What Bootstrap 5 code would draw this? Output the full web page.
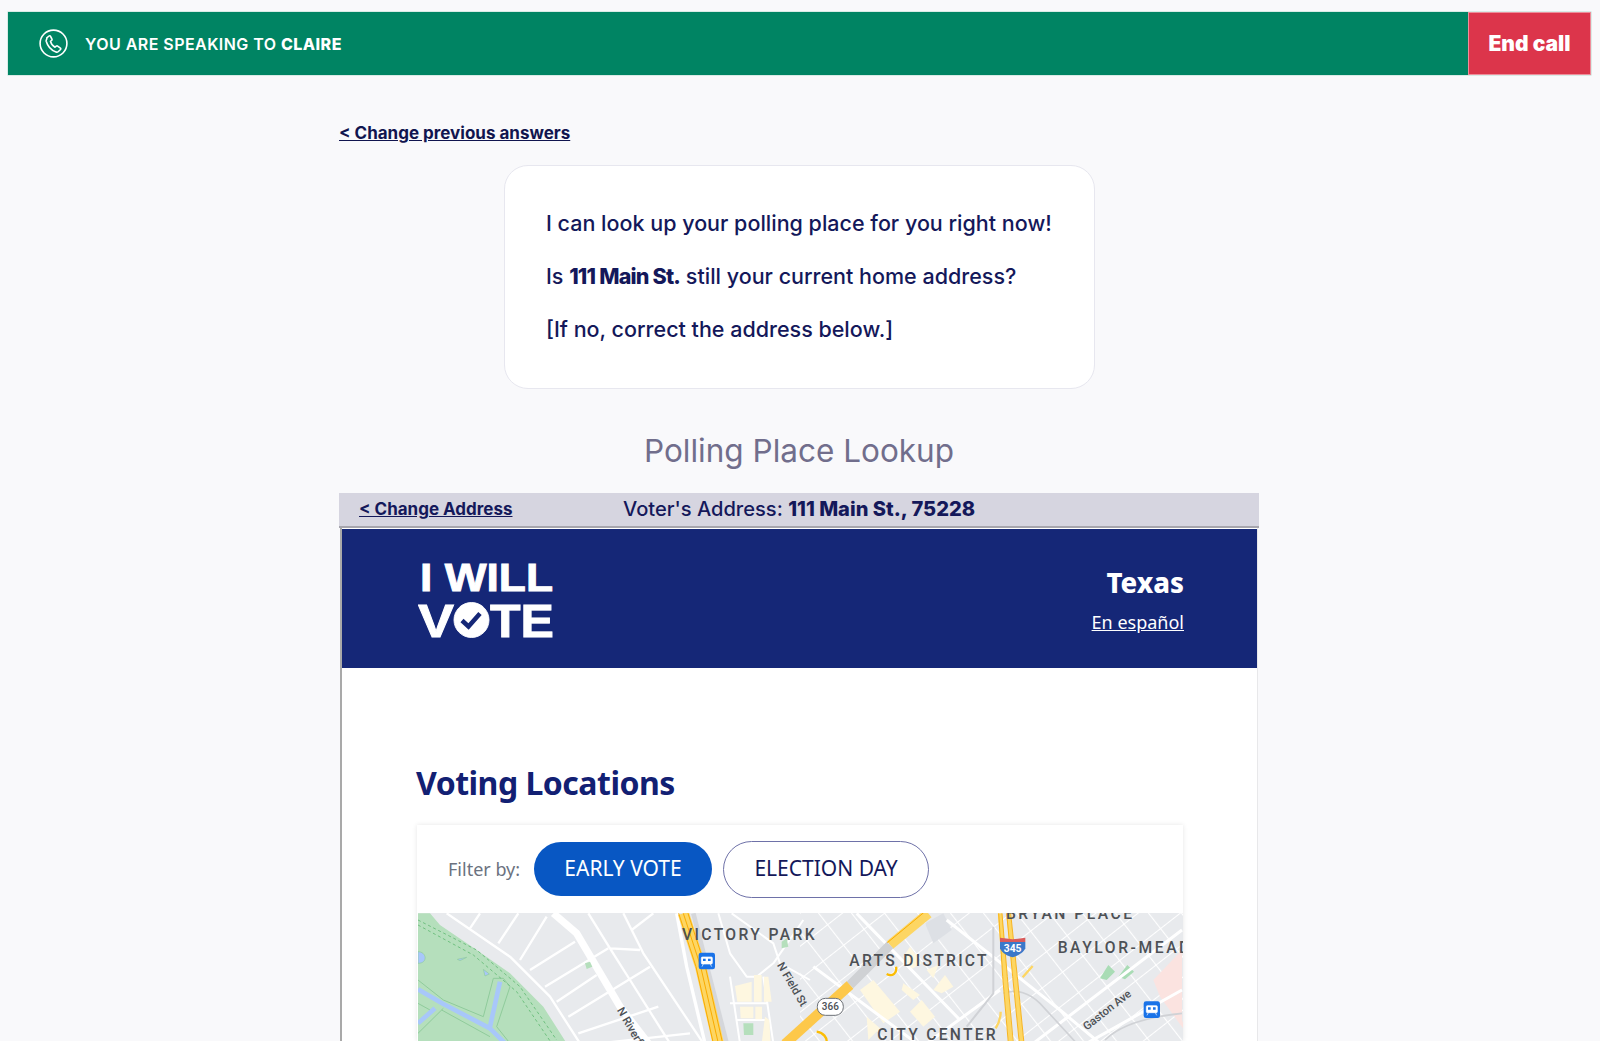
<!DOCTYPE html>
<html lang="en">
<head>
<meta charset="utf-8">
<title>Polling Place Lookup</title>
<link href="https://cdn.jsdelivr.net/npm/bootstrap@5.3.0/dist/css/bootstrap.min.css" rel="stylesheet">
<style>
html,body{height:1041px;overflow:hidden}
body{background:#f9f9fb;font-family:Inter,"Liberation Sans",sans-serif;color:#14185a}
.call-bar{margin:12px 9px 0 8px;height:63px;background:#008463;color:#fff;box-shadow:0 0 0 .5px #b9ddd2}
.call-label{padding-left:31px;gap:17px;font-size:16px;font-weight:600;letter-spacing:.45px;white-space:nowrap}
.call-label b{font-weight:800}
.end-call{width:123px;border-radius:0;background:#dc354b;color:#fff;font-size:21px;font-weight:900;border:0;box-shadow:0 0 0 1px #ee8e9b inset;padding:0}
.end-call:hover{background:#dc354b;color:#fff}
.page-col{width:920px;margin-left:339px}
.back-link{display:inline-block;margin-top:46px;line-height:24px;font-size:17px;font-weight:700;color:#11154f}
.script-box{width:591px;height:224px;margin:20px 0 0 165px;background:#fff;border:1px solid #e7e7ef;border-radius:24px;padding:42px 0 0 41px;font-size:21.5px;font-weight:500;color:#14185a}
.script-box p{margin:0 0 22px;line-height:31px;white-space:nowrap}
.script-box b{font-weight:800;letter-spacing:-.8px}
.lookup-title{margin:40px 0 0;line-height:44px;font-size:31.5px;font-weight:400;color:#716e8c;text-align:center}
.addr-bar{margin-top:20px;height:35px;background:#d6d5e0;border-bottom:2px solid #a6a5ad}
.addr-link{width:284px;padding-left:20px;font-size:17px;font-weight:700;color:#14185a}
.addr-text{font-size:20.1px;font-weight:500;white-space:nowrap}
.addr-text b{font-weight:800}
.embed-frame{margin:0 1px;height:515px;background:#fff;border-left:2px solid #a9a9a9;border-right:1px solid #e8e8ea;padding-top:1px}
.embed-head{height:139px;background:#152777;color:#fff;padding:0 73px 0 76px}
.logo-svg{display:block}
.state-block{padding-top:2px}
.state-name{font-size:27.5px;font-weight:800;line-height:34px;margin-bottom:10px;font-family:"Noto Sans","Liberation Sans",sans-serif}
.lang-link{display:block;font-size:18px;color:#fff;line-height:24px;font-family:"Noto Sans","Liberation Sans",sans-serif}
.embed-body{padding:93px 74px 0 75px}
.voting-title{margin:0 0 20px -1px;font:700 32px/44px "Noto Sans","Liberation Sans",sans-serif;color:#122073;letter-spacing:-.5px}
.filter-card{background:#fff;box-shadow:0 0 5px rgba(0,0,0,.1);padding-left:1px}
.filter-row{height:88px;padding-left:30px;font-family:"Noto Sans","Liberation Sans",sans-serif}
.filter-lbl{font-size:18px;color:#6b7280;width:86px}
.pill-on,.pill-off{border-radius:30px;font-size:21px;padding:0;text-transform:uppercase}
.pill-on{width:178px;height:54px;background:#0857c3;color:#fff;border:0}
.pill-on:hover{background:#0857c3;color:#fff}
.pill-off{width:206px;height:57px;margin-left:11px;background:#fff;color:#14185a;border:1px solid #6e71a8}
.pill-off:hover{background:#fff;color:#14185a}
.map-svg{display:block;width:765px;height:128px}
.map-lbl{font-family:Roboto,"Liberation Sans",sans-serif;font-weight:500;fill:#4d5156}
</style>
</head>
<body>
<div class="call-bar d-flex align-items-stretch justify-content-between">
  <div class="call-label d-flex align-items-center">
    <svg width="29" height="29" viewBox="0 0 29 29" fill="none" stroke="#fff" stroke-width="1.6" aria-hidden="true">
      <circle cx="14.5" cy="14.5" r="13.4"/>
      <path d="M7.800 8.900 10 7c.5-.4 1.100-.3 1.400.2l1.500 2.800c.3.500.2 1-.2 1.400l-1.200 1c.7 2.600 2.100 4.600 4.500 5.800l1.300-1c.4-.3 1-.3 1.400 0l2.700 1.900c.5.400.5 1 .1 1.400l-2.100 2c-.7.600-1.500.8-2.400.5-5-1.900-8.300-5.500-9.800-10.800-.2-.9 0-1.600.6-2.300z" stroke-linejoin="round"/>
    </svg>
    <span>YOU ARE SPEAKING TO <b>CLAIRE</b></span>
  </div>
  <button type="button" class="btn end-call">End call</button>
</div>

<main class="page-col">
  <a href="#" class="back-link">&lt; Change previous answers</a>
  <div class="script-box">
    <p>I can look up your polling place for you right now!</p>
    <p>Is <b>111 Main St.</b> still your current home address?</p>
    <p>[If no, correct the address below.]</p>
  </div>
  <h2 class="lookup-title">Polling Place Lookup</h2>
  <div class="addr-bar d-flex align-items-center">
    <a href="#" class="addr-link">&lt; Change Address</a>
    <div class="addr-text">Voter's Address: <b>111 Main St., 75228</b></div>
  </div>
  <div class="embed-frame">
    <header class="embed-head d-flex align-items-center justify-content-between">
      <svg class="logo-svg" width="140" height="96" viewBox="0 0 140 96" aria-label="I Will Vote logo">
        <g fill="#fff" stroke="#fff" stroke-width=".9" font-family="Liberation Sans, sans-serif" font-weight="700">
          <text x="2" y="40" font-size="38.500" textLength="133" lengthAdjust="spacingAndGlyphs">I WILL</text>
          <text x="0" y="86" font-size="47" textLength="36" lengthAdjust="spacingAndGlyphs">V</text>
          <text x="72" y="86" font-size="47" textLength="64" lengthAdjust="spacingAndGlyphs">TE</text>
          <circle cx="53.500" cy="69" r="17.500"/>
        </g>
        <path d="M44 69.500 50.500 75.500 62 62.500" fill="none" stroke="#152777" stroke-width="4.500"/>
      </svg>
      <div class="text-end state-block">
        <div class="state-name">Texas</div>
        <a href="#" class="lang-link">En español</a>
      </div>
    </header>
    <section class="embed-body">
      <h2 class="voting-title">Voting Locations</h2>
      <div class="filter-card">
        <div class="filter-row d-flex align-items-center">
          <span class="filter-lbl">Filter by:</span>
          <button type="button" class="btn pill-on">Early Vote</button>
          <button type="button" class="btn pill-off">Election Day</button>
        </div>
        <svg class="map-svg" viewBox="418 913 765 128" aria-label="Map of downtown Dallas">
          <defs>
            <pattern id="gridPat" width="26" height="26" patternUnits="userSpaceOnUse" patternTransform="rotate(-38 800 900)">
              <path d="M0 0H26M0 0V26" stroke="#fff" stroke-width="2.200" fill="none"/>
            </pattern>
          </defs>
          <rect x="418" y="913" width="765" height="128" fill="#e8eaed"/>
          <rect x="800" y="913" width="383" height="128" fill="url(#gridPat)"/>
          <g transform="translate(410 900) scale(.33333)" fill="none" stroke-linejoin="round">
            <path d="M0 40H60L90 75 200 150 300 220 400 320 470 430H0Z" fill="#b5dfbc"/>
            <g stroke="#fff" stroke-width="7">
              <path d="M110 40 300 170 420 290 510 430"/>
              <path d="M210 40 180 85M325 40 265 130M410 50 330 180M495 125 360 210M595 145 405 260M560 225 440 305M720 200 475 350M745 320 505 400M840 400 570 430"/>
              <path d="M535 40 600 145 660 240 780 430M640 40 700 160 880 430M600 145 690 150M665 90 730 40"/>
            </g>
            <path d="M430 40 500 100 630 320 715 430" stroke="#fff" stroke-width="22"/>
            <path d="M800 40 830 200 885 430" stroke="#fff" stroke-width="10"/>
            <path d="M850 40 950 430" stroke="#d5d7db" stroke-width="14"/>
            <path d="M820 40 872 200 925 430" stroke="#fdd663" stroke-width="34"/>
            <path d="M806 40 858 200 910 430M834 40 886 200 938 430M820 40 872 200 925 430" stroke="#f9ab00" stroke-width="3"/>
            <g stroke="#fff" stroke-width="6">
              <path d="M925 40 960 160 1010 230 1040 230 1090 190 1180 60M965 40 1090 130 1110 190 1200 240M960 230 990 430M1060 230 1090 430M960 310 1070 310M980 360 1070 360"/>
            </g>
            <g fill="#fef7e0" stroke="none">
              <path d="M975 258 1025 245V305H982ZM1032 225H1055V305H1032ZM1062 230H1075L1085 305H1062ZM990 320H1030V355H992ZM1036 320H1056V358H1036ZM1065 350 1078 360 1082 430H1055Z"/>
            </g>
            <path d="M1000 370H1030V405H1002Z" fill="#b5dfbc" stroke="none"/>
            <path d="M525 190 540 185 547 200 530 207ZM1115 125 1130 115 1135 140 1115 145Z" fill="#b5dfbc" stroke="none"/>
            <g stroke="#8fcb9b" stroke-width="3">
              <path d="M24 240 100 300 220 350 250 235 280 235 300 260 260 380 300 430M24 310 60 330 24 370M100 325 24 400M95 330 240 410"/>
              <path d="M24 60 200 150 330 260 440 420M24 75 190 165 320 275 425 430" stroke-dasharray="9 8" stroke="#6fc07f"/>
            </g>
            <path d="M24 268 100 312 240 385 285 430M270 245 240 380M24 370 75 325" stroke="#a8c7fa" stroke-width="14"/>
            <path d="M24 155C50 155 55 190 24 190ZM142 178 170 172 150 182ZM220 208 238 222 225 228Z" fill="#a8c7fa" stroke="#8fcb9b" stroke-width="2"/>
            <text class="map-lbl" x="816" y="120" font-size="47" textLength="398" lengthAdjust="spacing" stroke="none">VICTORY PARK</text>
            <rect x="866" y="158" width="49" height="50" rx="7" fill="#1a73e8" stroke="none"/>
            <path d="M877 171h27a3 3 0 0 1 3 3v15a3 3 0 0 1-3 3h-27a3 3 0 0 1-3-3v-15a3 3 0 0 1 3-3ZM880 192l-4 8M901 192l4 8" fill="#fff" stroke="#fff" stroke-width="2"/>
            <path d="M879 176h8v7h-8ZM894 176h8v7h-8Z" fill="#1a73e8" stroke="none"/>
            <text class="map-lbl" transform="translate(1100 195) rotate(60)" font-size="34" stroke="none" font-weight="400">N Field St</text>
            <text class="map-lbl" transform="translate(620 330) rotate(60)" font-size="34" stroke="none" font-weight="400">N Riverfront</text>
          </g>
          <g transform="translate(800 900) scale(.33333)" fill="none" stroke-linejoin="round">
            <path d="M1060 240 1146 150V360L1160 400 1080 290Z" fill="#fbe3e0" stroke="none"/>
            <path d="M375 70 430 40 455 90 400 130Z" fill="#dde0e5" stroke="none"/>
            <path d="M900 235 925 195 945 215 920 240ZM955 230 982 195 1002 215 975 238Z" fill="#a9dcb5" stroke="none"/>
            <g fill="#fef7e0" stroke="none">
              <path d="M180 270 220 240 300 335 250 370ZM330 140 365 190 330 210 310 170ZM310 250 360 285 340 300 305 270ZM400 270 435 225 460 260 425 280ZM330 335 365 300 405 350 370 380ZM200 350 240 385 205 420Z"/>
              <path d="M380 210 415 195 400 235Z"/>
            </g>
            <g stroke="#fff" stroke-width="9">
              <path d="M170 40 480 360M40 200 350 430M440 60 780 330 900 430M1146 90 700 430M1146 270 860 430M600 270 380 430"/>
            </g>
            <path d="M385 40 270 135" stroke="#fdd663" stroke-width="30"/>
            <path d="M371 38 256 133" stroke="#f9ab00" stroke-width="3"/>
            <path d="M270 135 150 255" stroke="#cfd1d4" stroke-width="28"/>
            <path d="M150 255 -45 432" stroke="#fdc84a" stroke-width="30"/>
            <path d="M260 222C278 232 292 218 288 200M50 395C70 398 82 412 80 430" stroke="#fbbc04" stroke-width="7"/>
            <path d="M580 80V280L500 380" stroke="#d0d2d6" stroke-width="6"/>
            <path d="M610 280C650 265 690 280 720 310L830 430" stroke="#d0d2d6" stroke-width="5"/>
            <path d="M1146 340C1050 350 960 375 915 420" stroke="#d0d2d6" stroke-width="5"/>
            <g stroke="#fdd663" stroke-width="13">
              <path d="M600 40 615 230 632 430"/><path d="M625 40 645 230 665 430"/>
            </g>
            <g stroke="#f9ab00" stroke-width="2.500">
              <path d="M596 40 608 230 625 430M606 40 622 230 640 430M620 40 638 230 658 430M632 40 652 230 672 430"/>
            </g>
            <path d="M602 335C602 355 595 372 587 385M668 232 698 198" stroke="#fdd663" stroke-width="7"/>
            <path d="M600 113 638 118 676 113V126H600Z" fill="#d95b5b" stroke="none"/>
            <path d="M600 126H676V145C670 160 650 168 638 172 622 168 606 160 600 145Z" fill="#3a78c9" stroke="none"/>
            <text x="638" y="157" text-anchor="middle" font-family="Roboto, sans-serif" font-weight="700" font-size="31" fill="#fff" stroke="none">345</text>
            <rect x="52" y="295" width="78" height="51" rx="24" fill="#fff" stroke="#6b6f75" stroke-width="3"/>
            <text x="91" y="331" text-anchor="middle" font-family="Roboto, sans-serif" font-weight="500" font-size="30" fill="#4d5156" stroke="none">366</text>
            <rect x="1031" y="304" width="49" height="50" rx="7" fill="#1a73e8" stroke="none"/>
            <path d="M1042 317h27a3 3 0 0 1 3 3v15a3 3 0 0 1-3 3h-27a3 3 0 0 1-3-3v-15a3 3 0 0 1 3-3ZM1045 338l-4 8M1066 338l4 8" fill="#fff" stroke="#fff" stroke-width="2"/>
            <path d="M1044 322h8v7h-8ZM1059 322h8v7h-8Z" fill="#1a73e8" stroke="none"/>
            <text class="map-lbl" x="148" y="199" font-size="47" textLength="412" lengthAdjust="spacing" stroke="none">ARTS DISTRICT</text>
            <text class="map-lbl" x="232" y="420" font-size="47" textLength="355" lengthAdjust="spacing" stroke="none">CITY CENTER</text>
            <text class="map-lbl" x="618" y="57" font-size="47" textLength="378" lengthAdjust="spacing" stroke="none">BRYAN PLACE</text>
            <text class="map-lbl" x="773" y="160" font-size="47" textLength="395" lengthAdjust="spacing" stroke="none">BAYLOR-MEAD</text>
            <text class="map-lbl" transform="translate(860 392) rotate(-38)" font-size="34" font-weight="400" stroke="none">Gaston Ave</text>
          </g>
        </svg>
      </div>
    </section>
  </div>
</main>
<script src="https://cdn.jsdelivr.net/npm/bootstrap@5.3.0/dist/js/bootstrap.bundle.min.js"></script>
</body>
</html>
